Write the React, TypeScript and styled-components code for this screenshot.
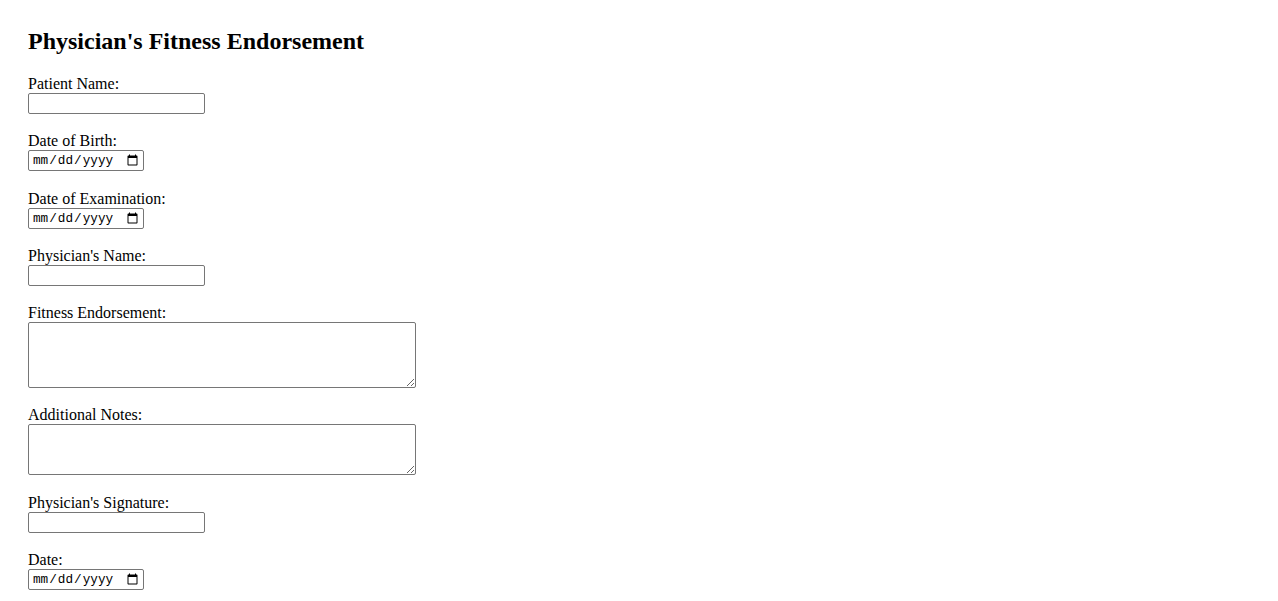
import React from "react";
import styled, { createGlobalStyle } from "styled-components";

const GlobalStyle = createGlobalStyle`
  html, body {
    margin: 0;
    padding: 0;
    background: #ffffff;
  }
  body {
    font-family: "Liberation Serif", "Times New Roman", serif;
    font-size: 16px;
    color: #000000;
  }
`;

const Page = styled.div`
  padding: 28px;
`;

const Title = styled.h2`
  margin: 0 0 20px 0;
  font-size: 24px;
  font-weight: bold;
  line-height: normal;
`;

const Form = styled.form`
  display: block;
`;

const Field = styled.div`
  margin-bottom: 18.3px;
`;

const Label = styled.label`
  display: block;
  line-height: normal;
`;

const TextInput = styled.input`
  display: block;
  box-sizing: border-box;
  width: 177px;
  height: 21px;
  margin: 0;
  padding: 1px 2px;
  border: 1px solid #767676;
  border-radius: 2px;
  font-family: "Liberation Sans", Arial, sans-serif;
  font-size: 13.33px;
  background: #fff;
`;

const DateInput = styled.input`
  display: block;
  box-sizing: border-box;
  width: 116px;
  height: 21px;
  margin: 0;
  padding: 1px 2px 1px 3px;
  border: 1px solid #767676;
  border-radius: 2px;
  font-family: "Liberation Mono", "DejaVu Sans Mono", monospace;
  font-size: 12.7px;
  color: #000;
  background: #fff;
`;

const TextArea = styled.textarea<{ $h: number }>`
  display: block;
  box-sizing: border-box;
  width: 388px;
  height: ${(p) => p.$h}px;
  margin: 0;
  padding: 2px;
  border: 1px solid #767676;
  border-radius: 2px;
  font-family: "Liberation Mono", monospace;
  font-size: 13.33px;
  background: #fff;
`;

export default function App() {
  return (
    <Page>
      <GlobalStyle />
      <Title>Physician's Fitness Endorsement</Title>
      <Form>
        <Field>
          <Label htmlFor="patientName">Patient Name:</Label>
          <TextInput type="text" id="patientName" />
        </Field>
        <Field>
          <Label htmlFor="dob">Date of Birth:</Label>
          <DateInput type="date" id="dob" />
        </Field>
        <Field>
          <Label htmlFor="exam">Date of Examination:</Label>
          <DateInput type="date" id="exam" />
        </Field>
        <Field>
          <Label htmlFor="physician">Physician's Name:</Label>
          <TextInput type="text" id="physician" />
        </Field>
        <Field>
          <Label htmlFor="endorse">Fitness Endorsement:</Label>
          <TextArea id="endorse" $h={66} />
        </Field>
        <Field>
          <Label htmlFor="notes">Additional Notes:</Label>
          <TextArea id="notes" $h={51} />
        </Field>
        <Field>
          <Label htmlFor="sig">Physician's Signature:</Label>
          <TextInput type="text" id="sig" />
        </Field>
        <Field>
          <Label htmlFor="date">Date:</Label>
          <DateInput type="date" id="date" />
        </Field>
      </Form>
    </Page>
  );
}
